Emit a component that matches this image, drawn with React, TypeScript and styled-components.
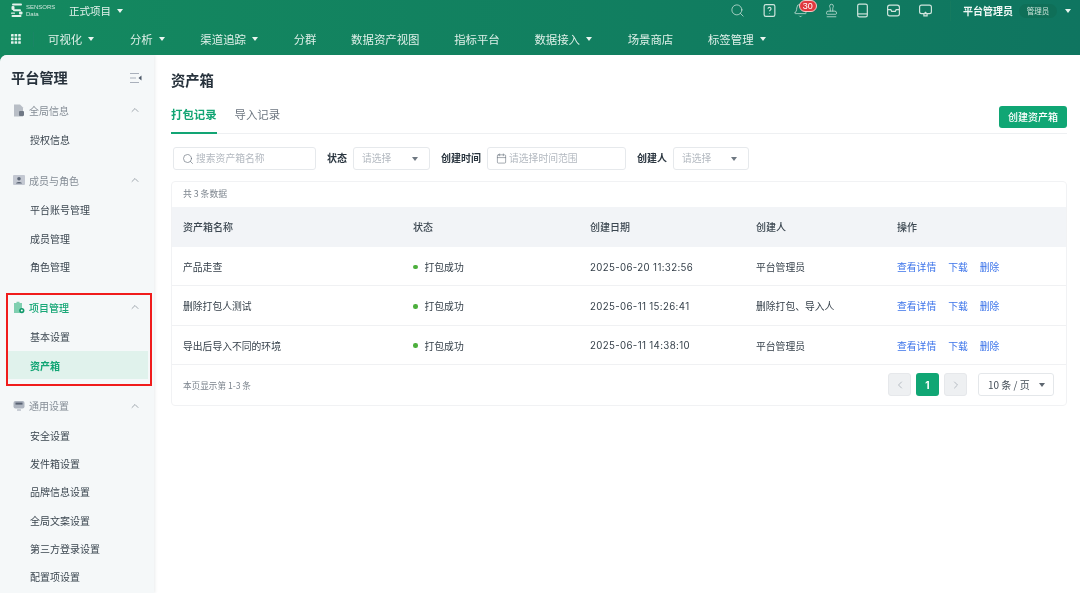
import React from 'react';
import styled, { createGlobalStyle } from 'styled-components';
import { Search, Bell, Stamp, ChevronUp, ChevronLeft, ChevronRight, Calendar } from 'lucide-react';

const Global = createGlobalStyle`
  html, body { margin: 0; padding: 0; background: #fff; }
  body { font-family: "Noto Sans CJK SC", "Noto Sans", sans-serif; color: #2f3b47; }
  * { box-sizing: border-box; }
`;

const Page = styled.div`
  position: relative; width: 1080px; height: 593px; overflow: hidden; display: flex; flex-direction: column;
  background: linear-gradient(90deg, #14895f 0%, #117e60 60%, #0f7560 100%);
  filter: blur(0.35px);
`;
const TopBar = styled.header`
  height: 24px; display: flex; align-items: center; padding: 0 0 3px 11px; color: #e6f3ee; flex: none;
`;
const LogoWrap = styled.div`display: flex; align-items: center; width: 58px; gap: 3px;`;
const LogoText = styled.div`font: 6px/6.5px "Liberation Sans", sans-serif; color: #cfe6dc; width: 30px;`;
const Project = styled.div`font-size: 10.5px; display: flex; align-items: center; gap: 6px; line-height: 20px;`;
const Caret = styled.span<{ $c?: string }>`
  display: inline-block; width: 0; height: 0; border-left: 3.5px solid transparent; border-right: 3.5px solid transparent;
  border-top: 4px solid ${p => p.$c ?? '#eaf5f0'}; flex: none;
`;
const TopRight = styled.div`margin-left: auto; display: flex; align-items: center;`;
const IconRow = styled.div`display: flex; align-items: center; gap: 16.2px; padding-right: 17.5px; border-right: 1px solid #157a5f; height: 20px;`;
const IconBox = styled.span`position: relative; width: 15px; height: 15px; display: flex; color: #cfe5dd;`;
const Badge = styled.span`
  position: absolute; left: 6px; top: -3px; width: 18px; height: 12px; border-radius: 6px; background: #e0393e;
  border: 1px solid #f6c9c9; color: #fff; font: 9px/10px "Liberation Sans", sans-serif; text-align: center;
`;
const UserName = styled.span`font-size: 10px; font-weight: 700; margin-left: 12px; color: #f0f8f5; line-height: 20px;`;
const RolePill = styled.span`
  margin-left: 6px; width: 38px; height: 14px; border-radius: 7px; background: #0f6f58; color: #cfe6dc;
  font-size: 7.5px; line-height: 14px; text-align: center;
`;
const UserCaret = styled.span`display: flex; margin: 0 9px 0 8px;`;

const NavBar = styled.nav`
  height: 31px; display: flex; align-items: center; flex: none; color: #dff0e9; font-size: 11.4px; padding-bottom: 1px;
`;
const Grid = styled.span`width: 34px; height: 15px; display: flex; align-items: center; padding-left: 11px; border-right: 1px solid #1a8565;`;
const NavList = styled.div`display: flex; gap: 34.7px; padding-left: 14px;`;
const NavItem = styled.span<{ $caret?: boolean }>`
  display: flex; align-items: center; gap: 6px; line-height: 18px; white-space: nowrap; padding-right: ${p => (p.$caret ? 1 : 0)}px;
`;

const Body = styled.div`flex: 1; display: flex; min-height: 0; background: #fff; border-top-left-radius: 7px; overflow: hidden;`;
const Side = styled.aside`
  width: 154px; flex: none; background: #f5f8f9; box-shadow: 1px 0 3px rgba(20, 40, 50, .09); position: relative; z-index: 1; overflow: hidden;
`;
const SideHead = styled.div`height: 40px; padding: 12px 12px 0 11px; display: flex; justify-content: space-between; align-items: flex-start;`;
const SideTitle = styled.h2`margin: 0; font-size: 14.2px; line-height: 20px; font-weight: 700; color: #27323c;`;
const ToggleIcon = styled.span`display: flex; margin-top: 5px;`;
const Section = styled.div`margin-bottom: 12.15px;`;
const SecHead = styled.div<{ $on?: boolean }>`
  height: 30px; display: flex; align-items: center; padding: 0 13px 0 13px; font-size: 10px; gap: 4px;
  color: ${p => (p.$on ? '#1aa878' : '#858d96')}; font-weight: ${p => (p.$on ? 500 : 400)};
`;
const SecChevron = styled.span`margin-left: auto; display: flex; color: #7d8790;`;
const Item = styled.div<{ $on?: boolean }>`
  height: 28.25px; margin: 0 6px 0 8px; padding-left: 22px; font-size: 10px; line-height: 30px; color: ${p => (p.$on ? '#12a574' : '#3b4650')};
  font-weight: ${p => (p.$on ? 700 : 400)}; background: ${p => (p.$on ? '#e0f2ec' : 'transparent')};
`;
const RedBox = styled.div`position: absolute; left: 6px; top: 238px; width: 146px; height: 93px; border: 2px solid #f01c1c; pointer-events: none;`;

const Main = styled.main`flex: 1; min-width: 0; padding: 13px 13px 0 17px;`;
const Title = styled.h1`margin: 0 0 12px; font-size: 14.3px; line-height: 24px; font-weight: 700; color: #27323c;`;
const TabsRow = styled.div`height: 30px; display: flex; align-items: flex-start; gap: 18px; border-bottom: 1px solid #eef0f2;`;
const Tab = styled.div<{ $on?: boolean }>`
  height: 30px; font-size: 11.4px; line-height: 20px; color: ${p => (p.$on ? '#12a574' : '#6d7680')}; font-weight: ${p => (p.$on ? 700 : 400)};
  border-bottom: ${p => (p.$on ? '2px solid #12a574' : 'none')};
`;
const CreateBtn = styled.button`
  margin: 2px 0 0 auto; width: 68px; height: 22px; border: 0; border-radius: 3px; background: #10a674; color: #fff;
  font: 500 10px/22px "Noto Sans CJK SC", sans-serif; padding: 0;
`;
const Filters = styled.div`margin: 13px 0 0 2px; display: flex; align-items: center; height: 23px;`;
const Control = styled.div<{ $w: number }>`
  width: ${p => p.$w}px; height: 23px; border: 1px solid #e6e9ec; border-radius: 3px; background: #fff;
  display: flex; align-items: center; gap: 2px; padding: 0 8px 2px; font-size: 9.8px; color: #b3b9c0;
`;
const CtrlCaret = styled.span`display: flex; margin: 2px 3px 0 auto;`;
const FieldIcon = styled.span`display: flex; margin-top: 2px;`;
const Label = styled.span<{ $ml: number }>`margin-left: ${p => p.$ml}px; margin-right: 6px; font-size: 10px; line-height: 20px; font-weight: 700; color: #2b3640; padding-bottom: 2px;`;
const Card = styled.section`margin-top: 11px; height: 225px; border: 1px solid #f1f2f4; border-radius: 4px; background: #fff;`;
const Count = styled.div`height: 25px; padding-left: 11px; font-size: 8.8px; line-height: 23px; color: #7d858e;`;
const cols = '230px 177px 166px 141px 1fr';
const Head = styled.div`
  height: 40px; background: #f2f4f7; display: grid; grid-template-columns: ${cols}; align-items: center; padding: 0 0 1px 11px;
  font-size: 10px; font-weight: 500; color: #3b4650;
`;
const Row = styled.div`
  height: 39.3px; display: grid; grid-template-columns: ${cols}; align-items: center; padding: 2px 0 0 11px; font-size: 9.8px; color: #35404a;
  border-bottom: 1px solid #f0f1f3;
`;
const Num = styled.span`font-family: "Inter", "Noto Sans CJK SC", sans-serif; font-size: 9.7px; letter-spacing: .036em;`;
const Status = styled.span`display: flex; align-items: center; gap: 7px;`;
const Dot = styled.i`width: 4.5px; height: 4.5px; border-radius: 50%; background: #4caf3c;`;
const Ops = styled.span`display: flex; gap: 12px;`;
const Link = styled.a`color: #3c74ea; font-size: 9.8px;`;
const Foot = styled.div`height: 40px; display: flex; align-items: center; padding: 0 12px 0 11px; font-size: 8.6px; color: #7d858e;`;
const Pager = styled.div`margin-left: auto; display: flex; align-items: center; gap: 5px;`;
const PageBtn = styled.span<{ $on?: boolean }>`
  width: 23px; height: 23px; border-radius: 3px; display: flex; align-items: center; justify-content: center;
  background: ${p => (p.$on ? '#10a674' : '#eef0f2')}; color: ${p => (p.$on ? '#fff' : '#b6bcc3')}; font: 700 10px "Inter", sans-serif;
  border: ${p => (p.$on ? 'none' : '1px solid #e6e8eb')};
`;
const SizeSel = styled.div`
  margin-left: 6px; width: 76px; height: 23px; border: 1px solid #e4e7ea; border-radius: 3px; display: flex; align-items: center;
  padding: 0 8px 0 9px; font-size: 10px; color: #454f59; justify-content: space-between;
`;

const Logo = () => (
  <svg width="12" height="15" viewBox="0 0 12 15" fill="#e4f2ec">
    <rect x="1" y="0.5" width="10" height="2" rx="1" /><rect x="0.5" y="3" width="3" height="4" rx="1" />
    <rect x="2" y="6.2" width="8" height="2" rx="1" /><rect x="8" y="8.5" width="3.5" height="3" rx="1" />
    <rect x="0.5" y="12" width="10" height="2" rx="1" /><rect x="0" y="9.5" width="4" height="1.3" rx=".6" />
  </svg>
);
const Question = () => (
  <svg width="15" height="15" viewBox="0 0 14 14" fill="none" stroke="currentColor" strokeWidth="1.1">
    <rect x="2" y="1.5" width="10" height="11" rx="1.6" />
    <path d="M5.6 5.4a1.4 1.4 0 1 1 2.2 1.2c-.5.4-.8.6-.8 1.2M7 9.6v.5" />
  </svg>
);
const TabletIco = () => (
  <svg width="15" height="15" viewBox="0 0 14 14" fill="none" stroke="currentColor" strokeWidth="1.1">
    <rect x="2.5" y="1" width="9" height="12" rx="1.6" /><path d="M2.5 10.2h9" />
  </svg>
);
const InboxIco = () => (
  <svg width="15" height="15" viewBox="0 0 14 14" fill="none" stroke="currentColor" strokeWidth="1.1">
    <rect x="1.5" y="2" width="11" height="10" rx="2" /><path d="M1.5 6.2h3l.8 1.6h3.4l.8-1.6h3" />
  </svg>
);
const MonitorIco = () => (
  <svg width="15" height="15" viewBox="0 0 14 14" fill="none" stroke="currentColor" strokeWidth="1.1">
    <rect x="1.5" y="2" width="11" height="8" rx="1.8" />
    <path d="M5.5 10v2h3v-2" /><path d="M5 10h4L7 8z" fill="currentColor" stroke="none" />
  </svg>
);
const GridIco = () => (
  <svg width="10" height="10" viewBox="0 0 10 10" fill="#e2f1eb">
    {[0, 3.6, 7.2].flatMap(x => [0, 3.6, 7.2].map(y => <rect key={`${x}-${y}`} x={x} y={y} width="2.6" height="2.6" rx=".4" />))}
  </svg>
);
const Collapse = () => (
  <svg width="13" height="12" viewBox="0 0 13 12" fill="none" stroke="#a9b0bb" strokeWidth="1">
    <path d="M1 1.5h9M1 6h6M1 10.5h9" /><path d="M12.5 3.5v5L9.5 6z" fill="#4f5a6a" stroke="none" />
  </svg>
);
const DocIco = () => (
  <svg width="12" height="13" viewBox="0 0 12 13"><path d="M1 .5h6l3 3v9H1z" fill="#b8bec6" /><rect x="6" y="7" width="5" height="5" rx="1" fill="#6f7885" /></svg>
);
const CardIco = () => (
  <svg width="12" height="12" viewBox="0 0 12 12"><rect y="1" width="12" height="10" rx="1" fill="#c3c8d2" /><circle cx="6" cy="4.8" r="1.8" fill="#5e6878" /><path d="M3 9.5c.4-2 5.6-2 6 0z" fill="#5e6878" /></svg>
);
const ProjIco = () => (
  <svg width="12" height="13" viewBox="0 0 12 13"><path d="M1 2h2.5V.8h3V2H9v10H1z" fill="#7fcfb0" /><circle cx="8.8" cy="9.6" r="2.6" fill="#129a6c" /><circle cx="8.8" cy="9.6" r="1" fill="#fff" /></svg>
);
const GenIco = () => (
  <svg width="12" height="12" viewBox="0 0 12 12"><rect x=".5" y="1" width="11" height="7.5" rx="2" fill="#aeb5c0" /><rect x="2.5" y="2.6" width="7" height="2" fill="#596373" /><rect x="4" y="9" width="4" height="2" rx=".5" fill="#c8cdd5" /></svg>
);

const nav: [string, boolean][] = [
  ['可视化', true], ['分析', true], ['渠道追踪', true], ['分群', false], ['数据资产视图', false],
  ['指标平台', false], ['数据接入', true], ['场景商店', false], ['标签管理', true],
];
const sections = [
  { t: '全局信息', i: <DocIco />, items: ['授权信息'] },
  { t: '成员与角色', i: <CardIco />, items: ['平台账号管理', '成员管理', '角色管理'] },
  { t: '项目管理', i: <ProjIco />, on: true, items: ['基本设置', '资产箱'] },
  { t: '通用设置', i: <GenIco />, items: ['安全设置', '发件箱设置', '品牌信息设置', '全局文案设置', '第三方登录设置', '配置项设置'] },
];
const rows = [
  ['产品走查', '2025-06-20 11:32:56', '平台管理员'],
  ['删除打包人测试', '2025-06-11 15:26:41', '删除打包、导入人'],
  ['导出后导入不同的环境', '2025-06-11 14:38:10', '平台管理员'],
];

export default function App() {
  return (
    <Page>
      <Global />
      <TopBar>
        <LogoWrap>
          <Logo />
          <LogoText>SENSORS<br />Data</LogoText>
        </LogoWrap>
        <Project>正式项目 <Caret /></Project>
        <TopRight>
          <IconRow>
            <IconBox><Search size={15} strokeWidth={1.2} /></IconBox>
            <IconBox><Question /></IconBox>
            <IconBox><Bell size={15} strokeWidth={1.2} /><Badge>30</Badge></IconBox>
            <IconBox><Stamp size={15} strokeWidth={1.2} /></IconBox>
            <IconBox><TabletIco /></IconBox>
            <IconBox><InboxIco /></IconBox>
            <IconBox><MonitorIco /></IconBox>
          </IconRow>
          <UserName>平台管理员</UserName>
          <RolePill>管理员</RolePill>
          <UserCaret><Caret /></UserCaret>
        </TopRight>
      </TopBar>
      <NavBar>
        <Grid><GridIco /></Grid>
        <NavList>
          {nav.map(([t, c]) => <NavItem key={t} $caret={c}>{t}{c && <Caret />}</NavItem>)}
        </NavList>
      </NavBar>
      <Body>
        <Side>
          <SideHead><SideTitle>平台管理</SideTitle><ToggleIcon><Collapse /></ToggleIcon></SideHead>
          {sections.map(s => (
            <Section key={s.t}>
              <SecHead $on={s.on}>{s.i}{s.t}<SecChevron><ChevronUp size={12} strokeWidth={1.4} /></SecChevron></SecHead>
              {s.items.map(i => <Item key={i} $on={i === '资产箱'}>{i}</Item>)}
            </Section>
          ))}
          <RedBox />
        </Side>
        <Main>
          <Title>资产箱</Title>
          <TabsRow>
            <Tab $on>打包记录</Tab>
            <Tab>导入记录</Tab>
            <CreateBtn>创建资产箱</CreateBtn>
          </TabsRow>
          <Filters>
            <Control $w={143}><FieldIcon><Search size={12} strokeWidth={1.3} color="#67717b" /></FieldIcon>搜索资产箱名称</Control>
            <Label $ml={11}>状态</Label>
            <Control $w={77}>请选择<CtrlCaret><Caret $c="#6f7882" /></CtrlCaret></Control>
            <Label $ml={11}>创建时间</Label>
            <Control $w={139}><FieldIcon><Calendar size={11} strokeWidth={1.3} color="#67717b" /></FieldIcon>请选择时间范围</Control>
            <Label $ml={11}>创建人</Label>
            <Control $w={76}>请选择<CtrlCaret><Caret $c="#6f7882" /></CtrlCaret></Control>
          </Filters>
          <Card>
            <Count>共 3 条数据</Count>
            <Head><span>资产箱名称</span><span>状态</span><span>创建日期</span><span>创建人</span><span>操作</span></Head>
            {rows.map(r => (
              <Row key={r[0]}>
                <span>{r[0]}</span>
                <Status><Dot />打包成功</Status>
                <Num>{r[1]}</Num>
                <span>{r[2]}</span>
                <Ops><Link>查看详情</Link><Link>下载</Link><Link>删除</Link></Ops>
              </Row>
            ))}
            <Foot>
              本页显示第 1-3 条
              <Pager>
                <PageBtn><ChevronLeft size={12} /></PageBtn>
                <PageBtn $on>1</PageBtn>
                <PageBtn><ChevronRight size={12} /></PageBtn>
                <SizeSel>10 条 / 页<Caret $c="#5d6670" /></SizeSel>
              </Pager>
            </Foot>
          </Card>
        </Main>
      </Body>
    </Page>
  );
}
